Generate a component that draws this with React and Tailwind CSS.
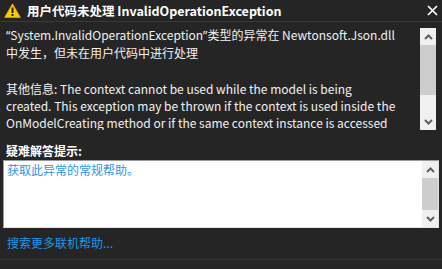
import React from "react";

const font = { fontFamily: '"Noto Sans CJK SC", "Noto Sans", sans-serif' };
const q = "font-['Noto_Sans',sans-serif]";

function Warn() {
  return (
    <svg width="17" height="15" viewBox="0 0 17 15" className="shrink-0">
      <path d="M8.5 0.8 L16.4 14.4 L0.6 14.4 Z" fill="#ffcc00" stroke="#e0a800" strokeWidth="0.8" strokeLinejoin="round" />
      <rect x="7.5" y="4.5" width="2" height="5.5" fill="#1e1e1e" />
      <rect x="7.5" y="11" width="2" height="2" fill="#1e1e1e" />
    </svg>
  );
}

function Chevron({ up }) {
  return (
    <svg width="9" height="6" viewBox="0 0 9 6">
      <path d={up ? "M1 5 L4.5 1.5 L8 5" : "M1 1 L4.5 4.5 L8 1"} fill="none" stroke="#606060" strokeWidth="2" />
    </svg>
  );
}

function ScrollBar({ full }) {
  return (
    <div className="w-[16px] h-full flex flex-col bg-[#f0f0f0] shrink-0">
      <div className="h-[17px] flex items-center justify-center shrink-0">
        <Chevron up />
      </div>
      {full ? (
        <div className="flex-1 bg-[#cdcdcd]" />
      ) : (
        <>
          <div className="h-[50px] bg-[#cdcdcd] shrink-0" />
          <div className="flex-1" />
        </>
      )}
      <div className="h-[17px] flex items-center justify-center shrink-0">
        <Chevron />
      </div>
    </div>
  );
}

export default function App() {
  return (
    <div
      className="w-[442px] h-[269px] bg-[#252526] text-[#f1f1f1] text-[12px] leading-[17px] flex flex-col overflow-hidden"
      style={font}
    >
      <div className="h-[22px] flex items-center pl-[4px] pr-[2px] border-b border-[#3a3a3c] shrink-0">
        <Warn />
        <div className="ml-[6px] font-bold text-white text-[12.5px] whitespace-nowrap flex-1">
          用户代码未处理 InvalidOperationException
        </div>
        <svg width="11" height="11" viewBox="0 0 11 11" className="mr-[2px]">
          <path d="M1 1 L10 10 M10 1 L1 10" stroke="#ffffff" strokeWidth="1.7" />
        </svg>
      </div>

      <div className="mt-[6px] h-[102px] flex pl-[6px] pr-[6px] shrink-0">
        <div className="flex-1 -mt-[2px] overflow-hidden whitespace-nowrap">
          <div>
            <span className={q}>“</span>System.InvalidOperationException<span className={q}>”</span>类型的异常在 Newtonsoft.Json.dll
          </div>
          <div>中发生，但未在用户代码中进行处理</div>
          <div className="mt-[19px]">其他信息: The context cannot be used while the model is being</div>
          <div>created. This exception may be thrown if the context is used inside the</div>
          <div>OnModelCreating method or if the same context instance is accessed</div>
        </div>
        <div className="ml-[2px]">
          <ScrollBar />
        </div>
      </div>

      <div className="mt-[12px] pl-[6px] font-bold text-white whitespace-nowrap">疑难解答提示:</div>

      <div className="mx-[3px] mt-[1px] h-[68px] bg-white border border-[#9a9a9a] border-b-[#e3e3e3] border-r-[#e3e3e3] flex shrink-0">
        <div className="flex-1 pl-[3px] text-[#2b95ee] whitespace-nowrap">获取此异常的常规帮助。</div>
        <ScrollBar full />
      </div>

      <div className="mt-[6px] pl-[7px] text-[#1c97ea] whitespace-nowrap">搜索更多联机帮助...</div>

      <div className="mt-[8px] border-t border-[#333337]" />
    </div>
  );
}
